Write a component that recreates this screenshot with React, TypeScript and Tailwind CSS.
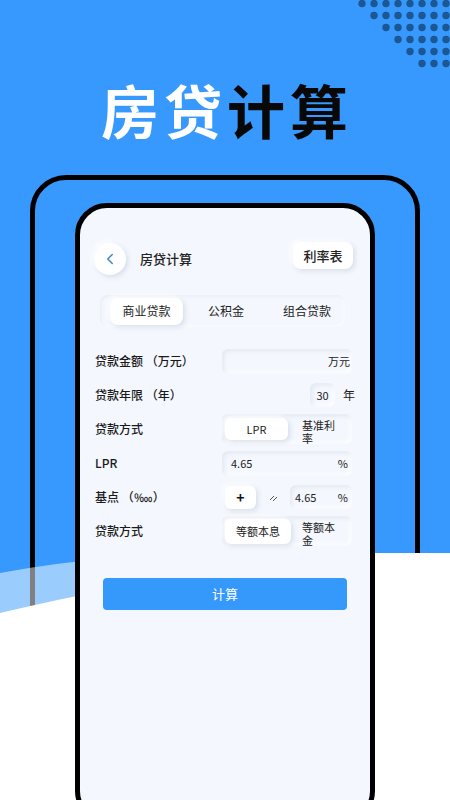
import { ChevronLeft } from 'lucide-react'

const raised = 'bg-white shadow-[2px_2px_5px_rgba(150,165,195,0.3),-2px_-2px_5px_rgba(255,255,255,0.9)]'
const sunken = 'shadow-[inset_2px_2px_4px_rgba(150,165,195,0.18),inset_-2px_-2px_4px_rgba(255,255,255,0.9)]'

function Dots() {
  const rows = [0, 1, 2, 3, 4, 5]
  const starts = [362, 374, 386, 398, 410, 422]
  return (
    <svg className="absolute left-0 top-0 w-[450px] h-[80px]" viewBox="0 0 450 80">
      {rows.map((r) => {
        const dots = []
        for (let x = starts[r]; x <= 452; x += 12) {
          dots.push(<circle key={x} cx={x} cy={3.5 + r * 12} r={3.7} fill="#1b5793" />)
        }
        return <g key={r}>{dots}</g>
      })}
    </svg>
  )
}

function Waves() {
  return (
    <svg className="absolute left-0 top-0 w-[450px] h-[800px] z-10 pointer-events-none" viewBox="0 0 450 800">
      <path d="M0 573 Q150 545 370 553 L370 800 L0 800 Z" fill="#ffffff" fillOpacity="0.5" />
      <path d="M0 613 Q180 570 375 553 L450 553 L450 800 L0 800 Z" fill="#ffffff" />
    </svg>
  )
}

function Row({ label, children }: { label: string; children: React.ReactNode }) {
  return (
    <div className="h-[34px] flex items-center">
      <div className="w-[127px] text-[12px] font-medium text-[#1a1a1a]">{label}</div>
      <div className="w-[130px] flex items-center">{children}</div>
    </div>
  )
}

export default function App() {
  return (
    <div className="relative w-[450px] h-[800px] overflow-hidden bg-[#3798fd] font-['Noto_Sans_CJK_SC',sans-serif]">
      <Dots />
      <Waves />

      <div className="pt-[80px] pl-[4px] text-center text-[58px] leading-[58px] tracking-[5px] font-bold">
        <span className="text-white">房贷</span>
        <span className="text-[#080808]">计算</span>
      </div>

      {/* outer frame */}
      <div className="mt-[37px] ml-[30px] w-[390px] h-[700px] border-[5px] border-black rounded-[36px]">
        {/* phone */}
        <div className="relative z-20 ml-[40px] mt-[23px] w-[300px] h-[620px] border-[5px] border-black rounded-[32px] bg-[#f4f7fd] overflow-hidden">
          {/* header */}
          <div className="mt-[34px] pl-[14px] pr-[17px] flex items-center">
            <div className={`w-8 h-8 rounded-full flex items-center justify-center ${raised}`}>
              <ChevronLeft size={18} strokeWidth={2} color="#3f86c9" />
            </div>
            <div className="ml-[14px] -mt-[1px] text-[13px] font-medium text-[#222]">房贷计算</div>
            <div className={`ml-auto mb-[7px] w-[60px] h-[27px] rounded-lg flex items-center justify-center text-[13px] font-medium text-[#222] ${raised}`}>
              利率表
            </div>
          </div>

          {/* tabs */}
          <div className="mt-[19px] ml-[20px] w-[245px] h-[32px] rounded-lg flex items-center pl-[10px] shadow-[inset_1px_1px_3px_rgba(150,165,195,0.15),inset_-1px_-1px_3px_rgba(255,255,255,0.9)] text-[12px] text-[#222]">
            <div className={`w-[73px] h-[27px] rounded-lg flex items-center justify-center ${raised}`}>商业贷款</div>
            <div className="w-[86px] text-center">公积金</div>
            <div className="w-[76px] text-center">组合贷款</div>
          </div>

          {/* form */}
          <div className="mt-[17px] pl-[15px]">
            <Row label="贷款金额 （万元）">
              <div className={`w-[130px] h-[25px] rounded-md flex items-center justify-end pr-[2px] text-[11px] text-[#222] ${sunken}`}>
                万元
              </div>
            </Row>
            <Row label="贷款年限 （年）">
              <div className="ml-[88px] flex items-center text-[12px] text-[#222]">
                <div className={`w-[25px] h-[24px] rounded-md flex items-center justify-center text-[11px] ${sunken}`}>30</div>
                <div className="ml-[8px]">年</div>
              </div>
            </Row>
            <Row label="贷款方式">
              <div className={`w-[130px] h-[30px] rounded-md flex items-center pl-[3px] ${sunken}`}>
                <div className={`w-[63px] h-[22px] rounded-md flex items-center justify-center text-[11px] text-[#222] ${raised}`}>LPR</div>
                <div className="ml-[14px] w-[38px] mt-[6px] text-[11px] leading-[13px] text-[#222]">基准利率</div>
              </div>
            </Row>
            <Row label="LPR">
              <div className={`w-[130px] h-[25px] rounded-md flex items-center pl-[9px] pr-[4px] text-[11px] text-[#222] ${sunken}`}>
                <span>4.65</span>
                <span className="ml-auto">%</span>
              </div>
            </Row>
            <Row label="基点 （‱）">
              <div className="flex items-center">
                <div className={`ml-[3px] w-[31px] h-[23px] rounded-md flex items-center justify-center text-[14px] font-bold text-[#111] ${raised}`}>+</div>
                <svg className="ml-[13px]" width="9" height="9" viewBox="0 0 9 9">
                  <path d="M1 7 L5 3 M4 8 L8 4" stroke="#555" strokeWidth="1" fill="none" />
                </svg>
                <div className={`ml-[12px] w-[62px] h-[24px] rounded-md flex items-center pl-[5px] pr-[4px] text-[11px] text-[#222] ${sunken}`}>
                  <span>4.65</span>
                  <span className="ml-auto">%</span>
                </div>
              </div>
            </Row>
            <Row label="贷款方式">
              <div className={`w-[130px] h-[30px] rounded-md flex items-center pl-[3px] ${sunken}`}>
                <div className={`w-[66px] h-[25px] rounded-md flex items-center justify-center text-[11px] text-[#222] ${raised}`}>等额本息</div>
                <div className="ml-[11px] w-[36px] mt-[6px] text-[11px] leading-[13px] text-[#222]">等额本金</div>
              </div>
            </Row>
          </div>

          <div className="mt-[30px] ml-[23px] w-[244px] h-[32px] rounded bg-[#3598fb] flex items-center justify-center text-[13px] text-white">
            计算
          </div>
        </div>
      </div>
    </div>
  )
}
